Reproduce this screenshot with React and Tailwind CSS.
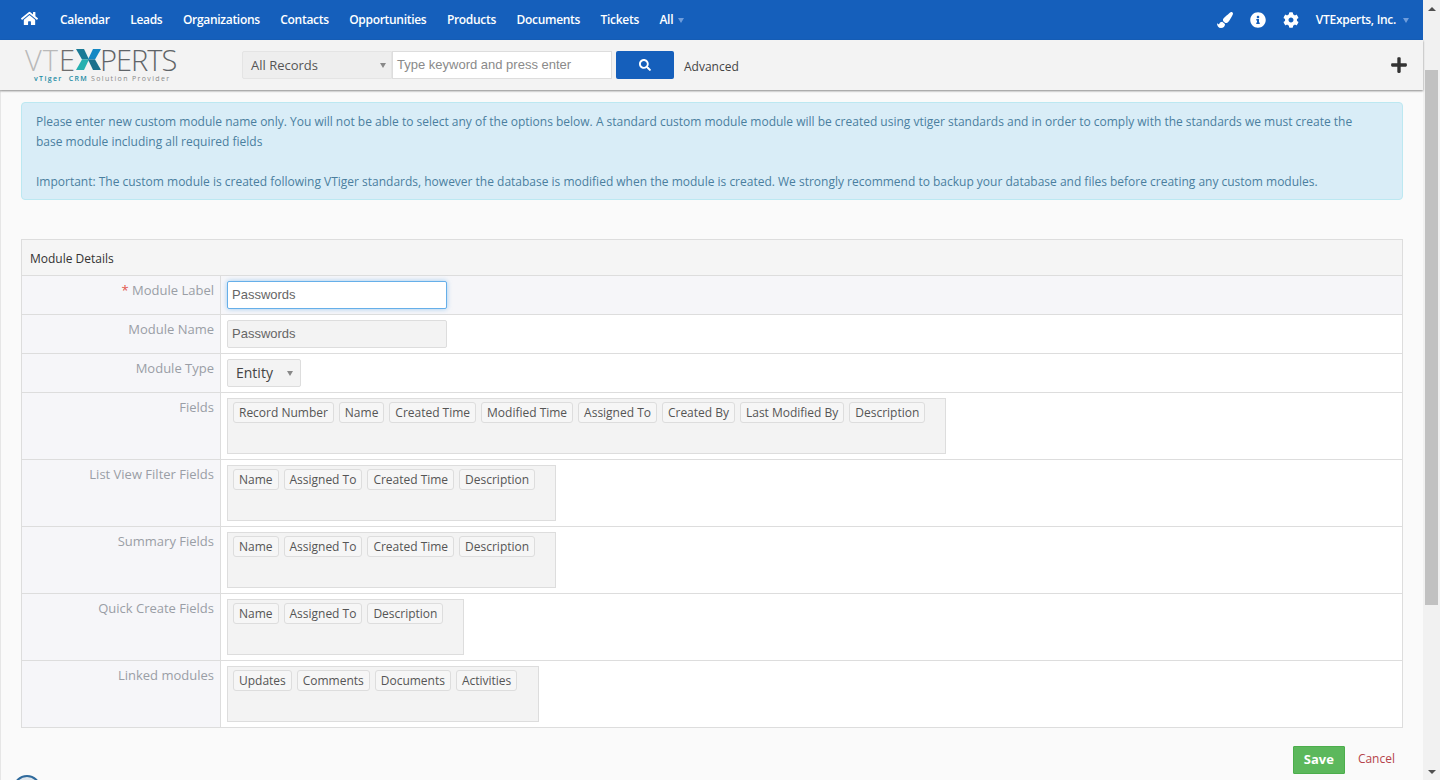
import React from "react";
import { FaHome, FaPaintBrush, FaInfoCircle, FaCog, FaSearch, FaPlus } from "react-icons/fa";

const NAV = ["Calendar", "Leads", "Organizations", "Contacts", "Opportunities", "Products", "Documents", "Tickets"];

const ROWS = [
  { label: "Fields", width: "w-[719px]", tags: ["Record Number", "Name", "Created Time", "Modified Time", "Assigned To", "Created By", "Last Modified By", "Description"] },
  { label: "List View Filter Fields", width: "w-[329px]", tags: ["Name", "Assigned To", "Created Time", "Description"] },
  { label: "Summary Fields", width: "w-[329px]", tags: ["Name", "Assigned To", "Created Time", "Description"] },
  { label: "Quick Create Fields", width: "w-[237px]", tags: ["Name", "Assigned To", "Description"] },
  { label: "Linked modules", width: "w-[312px]", tags: ["Updates", "Comments", "Documents", "Activities"] },
];

function Caret({ className }) {
  return <span className={`inline-block h-0 w-0 border-x-[3.5px] border-t-[5px] border-x-transparent ${className}`} />;
}

function Label({ children }) {
  return <div className="w-[199px] shrink-0 border-r border-[#dddddd] bg-[#f6f6f9] pr-[6px] pt-[4px] text-right text-[13px] leading-[20px] text-[#9a9ea6]">{children}</div>;
}

function Logo() {
  return (
    <div className="w-[152px] select-none">
      <div className="-mt-[1px] flex h-[26px] items-center text-[29px] leading-none font-light">
        <span className="tracking-[1px] text-[#b9b9b9]">VT</span>
        <span className="tracking-[1px] text-[#6d6d6d]">E</span>
        <svg viewBox="0 0 25 21" className="h-[21px] w-[25px] shrink-0">
          <path d="M0 0h8l5 10.5H6z" fill="#1a7a96" />
          <path d="M0 21h8l5-10.5H6z" fill="#25b0b0" />
          <path d="M25 0h-8l-5 10.5h7z" fill="#1588c4" />
          <path d="M25 21h-8l-5-10.5h7z" fill="#1c6f8c" />
        </svg>
        <span className="-ml-[1px] tracking-[-1px] text-[#5f6468]">PERTS</span>
      </div>
      <div className="mt-[2px] pl-[9px] text-[7px] leading-[9px] font-semibold tracking-[1.35px] whitespace-nowrap">
        <span className="text-[#1d8ca5]">vTiger</span>
        <span className="ml-[6px] text-[#1d8ca5]">CRM</span>
        <span className="ml-[3px] font-normal text-[#8a8a8a]">Solution Provider</span>
      </div>
    </div>
  );
}

export default function App() {
  return (
    <div className="flex h-[780px] w-[1440px] overflow-hidden bg-[#fafafa] font-['Open_Sans',sans-serif] text-[13px]">
      <div className="flex min-w-0 flex-1 flex-col">
        <header className="flex h-[40px] shrink-0 items-center bg-[#155fbb] text-white">
          <FaHome className="ml-[21px] h-[17px] w-[17px] -translate-y-[2px]" />
          <nav className="ml-[22px] flex items-center gap-[20.5px] text-[12px] font-semibold tracking-[-0.3px]">
            {NAV.map((item) => (
              <span key={item}>{item}</span>
            ))}
            <span className="flex items-center gap-[5px]">
              All <Caret className="border-t-[#6f9ddc]" />
            </span>
          </nav>
          <div className="ml-auto flex items-center text-[12px] font-semibold tracking-[-0.3px]">
            <FaPaintBrush className="h-[16px] w-[16px]" />
            <FaInfoCircle className="ml-[17px] h-[16px] w-[16px]" />
            <FaCog className="ml-[17px] h-[16px] w-[16px]" />
            <span className="ml-[17px]">VTExperts, Inc.</span>
            <Caret className="ml-[7px] mr-[14px] border-t-[#6f9ddc]" />
          </div>
        </header>

        <div className="relative z-10 flex h-[50px] shrink-0 items-center bg-[#f3f3f3] shadow-[0_1px_2px_rgba(0,0,0,0.45)]">
          <div className="ml-[25px]"><Logo /></div>
          <div className="ml-[65px] flex h-[28px] w-[150px] items-center justify-between rounded-l-[2px] border border-[#e4e4e4] bg-[#eeeeee] pl-[8px] pr-[5px] pt-[1px] text-[13px] text-[#555555]">
            All Records <Caret className="border-t-[#888888]" />
          </div>
          <div className="flex h-[28px] w-[220px] items-center border border-[#dddddd] bg-white pl-[4px] font-['Liberation_Sans',sans-serif] text-[13px] text-[#8a8a8a]">Type keyword and press enter</div>
          <button className="ml-[4px] flex h-[28px] w-[58px] items-center justify-center rounded-[2px] bg-[#155fbb] text-white">
            <FaSearch className="h-[12px] w-[12px]" />
          </button>
          <span className="ml-[10px] mt-[4px] text-[12px] text-[#444444]">Advanced</span>
          <FaPlus className="ml-auto mr-[15px] h-[18px] w-[18px] text-[#333333]" />
        </div>

        <main className="relative flex min-h-0 flex-1 flex-col border-l border-[#e6e6e6] pl-[20px] pr-[20px] pt-[12px]">
          <div className="h-[98px] rounded-[4px] border border-[#bce8f1] bg-[#d9edf7] pl-[14px] pr-[40px] pt-[9px] text-[12px] leading-[20px] tracking-[-0.005px] text-[#4a7f9f]">
            <p>Please enter new custom module name only. You will not be able to select any of the options below. A standard custom module module will be created using vtiger standards and in order to comply with the standards we must create the base module including all required fields</p>
            <p className="mt-[20px]">Important: The custom module is created following VTiger standards, however the database is modified when the module is created. We strongly recommend to backup your database and files before creating any custom modules.</p>
          </div>

          <section className="mt-[39px] border border-[#dddddd] bg-white">
            <div className="flex h-[36px] items-center border-b border-[#dddddd] bg-[#f5f5f5] pl-[8px] pt-[2px] text-[12px] text-[#333333]">Module Details</div>

            <div className="flex h-[39px] border-b border-[#dddddd] bg-[#f6f6f9]">
              <Label><span className="text-[#e2574c]">*</span> Module Label</Label>
              <div className="pl-[6px] pt-[5px]">
                <div className="flex h-[28px] w-[220px] items-center rounded-[2px] border border-[#66afe9] bg-white pl-[4px] font-['Liberation_Sans',sans-serif] text-[13px] text-[#666666] shadow-[0_0_5px_rgba(102,175,233,0.6)]">Passwords</div>
              </div>
            </div>

            <div className="flex h-[39px] border-b border-[#dddddd]">
              <Label>Module Name</Label>
              <div className="pl-[6px] pt-[5px]">
                <div className="flex h-[28px] w-[220px] items-center rounded-[2px] border border-[#dddddd] bg-[#f3f3f3] pl-[4px] font-['Liberation_Sans',sans-serif] text-[13px] text-[#666666]">Passwords</div>
              </div>
            </div>

            <div className="flex h-[39px] border-b border-[#dddddd]">
              <Label>Module Type</Label>
              <div className="pl-[6px] pt-[5px]">
                <div className="flex h-[28px] w-[74px] items-center justify-between rounded-[2px] border border-[#dddddd] bg-[#f3f3f3] pl-[8px] pr-[7px] text-[14px] text-[#444444]">
                  <span className="-translate-y-[1px]">Entity</span> <Caret className="border-t-[#888888]" />
                </div>
              </div>
            </div>

            {ROWS.map((row, i) => (
              <div key={row.label} className={i < ROWS.length - 1 ? "flex h-[67px] border-b border-[#dddddd]" : "flex h-[66px]"}>
                <Label>{row.label}</Label>
                <div className="pl-[6px] pt-[5px]">
                  <div className={`flex h-[56px] items-start gap-[5px] border border-[#dddddd] bg-[#f3f3f3] pl-[5px] pt-[3px] ${row.width}`}>
                    {row.tags.map((tag) => (
                      <span key={tag} className="flex h-[21px] items-center rounded-[3px] border border-[#dddddd] bg-[#f6f6f6] px-[5px] text-[12px] tracking-[-0.01px] whitespace-nowrap text-[#555555]">{tag}</span>
                    ))}
                  </div>
                </div>
              </div>
            ))}
          </section>

          <div className="mt-[18px] flex items-center justify-end pr-[8px]">
            <button className="h-[28px] w-[52px] rounded-[1px] border border-[#4cae4c] bg-[#5cb85c] text-[13px] font-bold text-white">Save</button>
            <span className="mb-[2px] ml-[13px] text-[12px] text-[#b5434a]">Cancel</span>
          </div>

          <div className="absolute left-[12px] top-[685px] h-[28px] w-[28px] rounded-full border-2 border-[#2f6a9c] bg-[#dfe6ec]" />
        </main>
      </div>

      <aside className="flex w-[17px] shrink-0 flex-col items-center bg-[#f1f1f1]">
        <div className="flex h-[17px] items-center justify-center"><span className="h-0 w-0 border-x-[4px] border-b-[4px] border-x-transparent border-b-[#505050]" /></div>
        <div className="mt-[53px] h-[535px] w-[13px] bg-[#c1c1c1]" />
        <div className="mt-auto flex h-[17px] items-center justify-center"><span className="h-0 w-0 border-x-[4px] border-t-[4px] border-x-transparent border-t-[#505050]" /></div>
      </aside>
    </div>
  );
}
